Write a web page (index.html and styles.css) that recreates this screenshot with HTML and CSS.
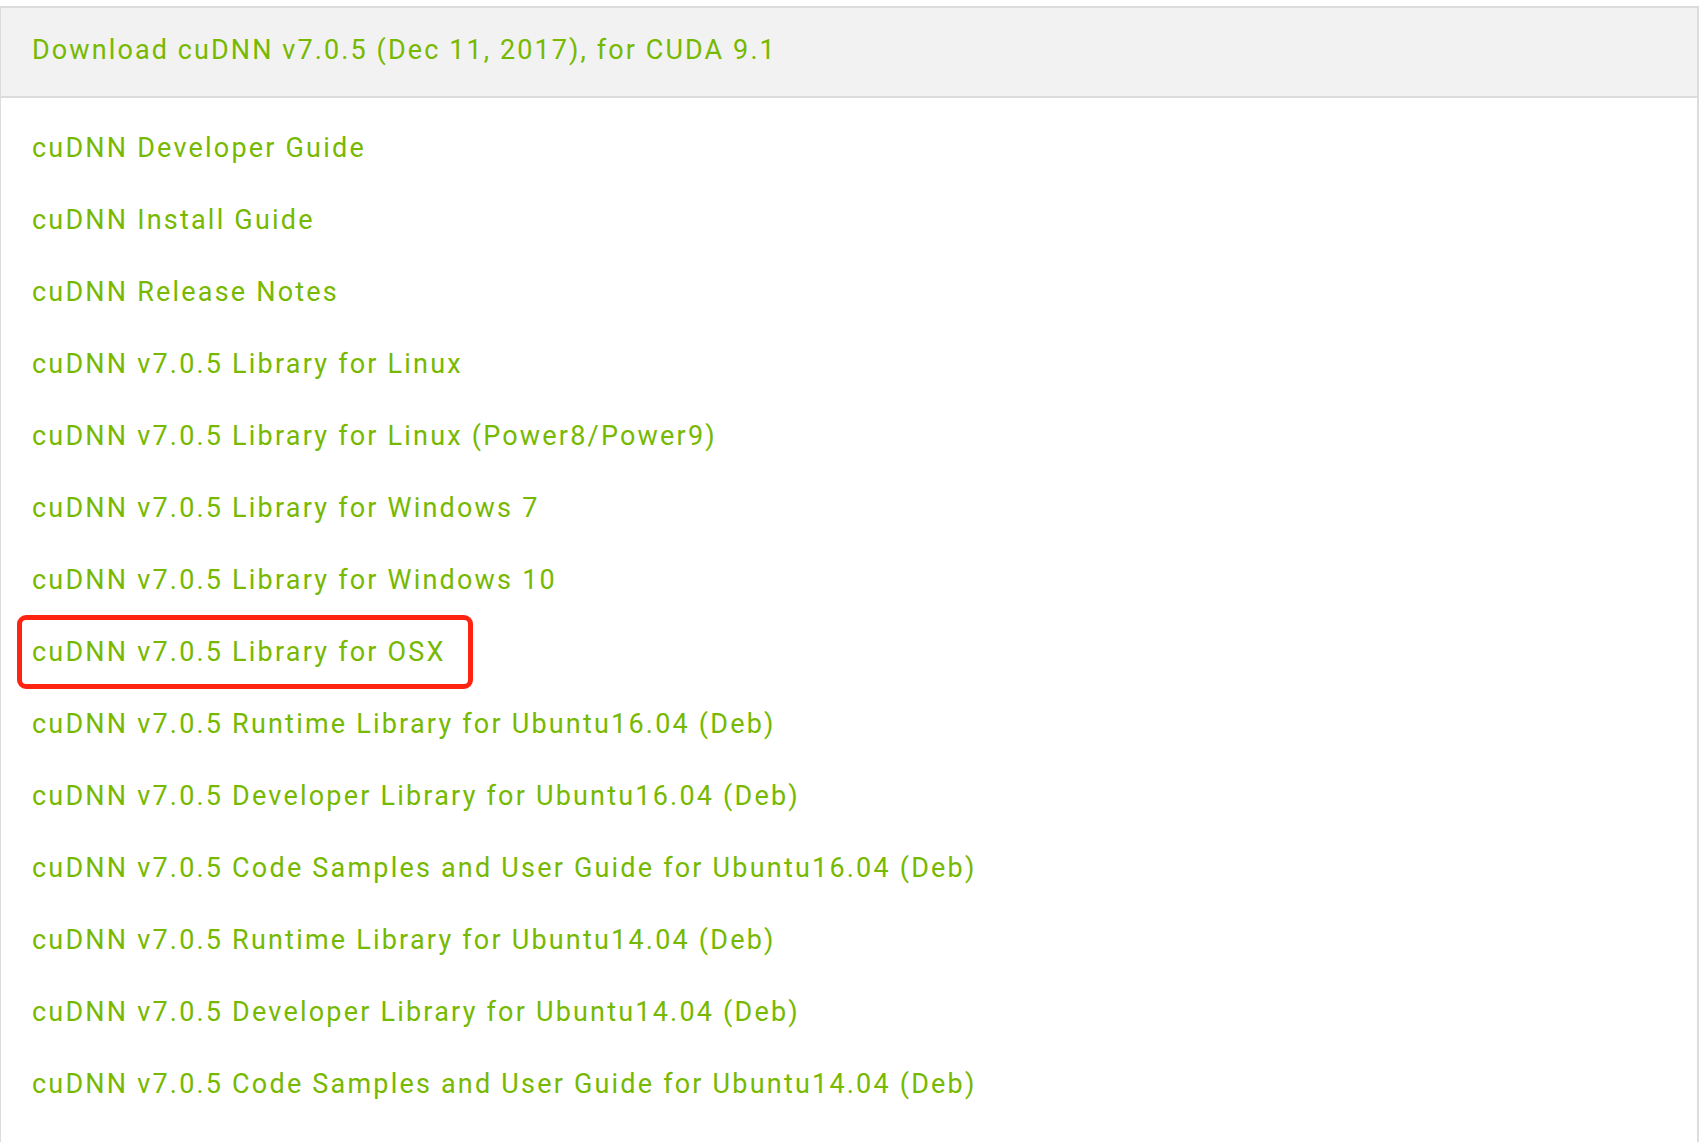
FILE: index.html
```
<!DOCTYPE html>
<html lang="en">
<head>
  <meta charset="UTF-8" />
  <title>cuDNN Download</title>
  <link rel="stylesheet" href="styles.css">
</head>
<body>

  <div class="panel">
    <div class="panel-head">
      <a href="#">Download cuDNN v7.0.5 (Dec 11, 2017), for CUDA 9.1</a>
    </div>

    <ul class="downloads">
      <li><a href="#">cuDNN Developer Guide</a></li>
      <li><a href="#">cuDNN Install Guide</a></li>
      <li><a href="#">cuDNN Release Notes</a></li>
      <li><a href="#">cuDNN v7.0.5 Library for Linux</a></li>
      <li><a href="#">cuDNN v7.0.5 Library for Linux (Power8/Power9)</a></li>
      <li><a href="#">cuDNN v7.0.5 Library for Windows 7</a></li>
      <li><a href="#">cuDNN v7.0.5 Library for Windows 10</a></li>
      <li class="marked"><a href="#">cuDNN v7.0.5 Library for OSX</a></li>
      <li><a href="#">cuDNN v7.0.5 Runtime Library for Ubuntu16.04 (Deb)</a></li>
      <li><a href="#">cuDNN v7.0.5 Developer Library for Ubuntu16.04 (Deb)</a></li>
      <li><a href="#">cuDNN v7.0.5 Code Samples and User Guide for Ubuntu16.04 (Deb)</a></li>
      <li><a href="#">cuDNN v7.0.5 Runtime Library for Ubuntu14.04 (Deb)</a></li>
      <li><a href="#">cuDNN v7.0.5 Developer Library for Ubuntu14.04 (Deb)</a></li>
      <li><a href="#">cuDNN v7.0.5 Code Samples and User Guide for Ubuntu14.04 (Deb)</a></li>
    </ul>
  </div>

</body>
</html>
```

FILE: styles.css
```
body {
  margin: 0;
  background-color: white;
  font-family: Roboto, "Liberation Sans", sans-serif;
}
a { color: #76b900; text-decoration: none; }

.panel {
  margin-top: 6px;
  width: 1696px;
  border-top: 2px solid #dcdcdc;
  border-left: 1px solid #dcdcdc;
  border-right: 2px solid #dcdcdc;
  min-height: 1136px;
}
.panel-head {
  background-color: #f2f2f2;
  height: 84px;
  border-bottom: 2px solid #dcdcdc;
  display: flex;
  align-items: center;
  padding: 0 0 4px 31px;
  font-size: 27px;
  letter-spacing: 2.1px;
}

.downloads {
  list-style: none;
  margin: 0;
  padding: 14px 0 0 31px;
}
.downloads li {
  height: 72px;
  line-height: 72px;
  font-size: 27px;
  letter-spacing: 2.2px;
}
.marked { position: relative; }
.marked::after {
  content: "";
  position: absolute;
  left: -15px;
  top: -1px;
  width: 446px;
  height: 64px;
  border: 5px solid #ff2412;
  border-radius: 9px;
}
```
